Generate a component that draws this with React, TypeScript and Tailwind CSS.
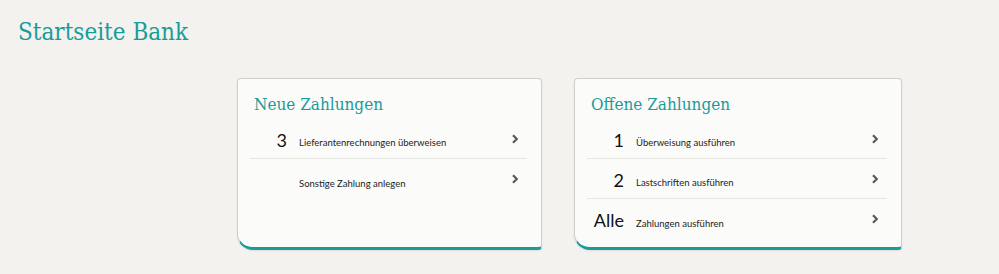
import React from "react";

type Row = { count?: string; label: string };

const cards: { title: string; rows: Row[]; width: string }[] = [
  {
    title: "Neue Zahlungen",
    width: "w-[305px]",
    rows: [
      { count: "3", label: "Lieferantenrechnungen überweisen" },
      { label: "Sonstige Zahlung anlegen" },
    ],
  },
  {
    title: "Offene Zahlungen",
    width: "w-[328px]",
    rows: [
      { count: "1", label: "Überweisung ausführen" },
      { count: "2", label: "Lastschriften ausführen" },
      { count: "Alle", label: "Zahlungen ausführen" },
    ],
  },
];

function Chevron() {
  return (
    <svg width="8" height="10" viewBox="0 0 8 10" className="text-[#5a5a5a]">
      <path d="M2 1.2 L5.8 5 L2 8.8" fill="none" stroke="currentColor" strokeWidth="2.2" />
    </svg>
  );
}

export default function App() {
  return (
    <div className="w-[999px] h-[274px] bg-[#f3f2ef] font-['Lato',sans-serif] overflow-hidden">
      <h1 className="pl-[18px] pt-[17px] text-[24px] leading-[30px] text-[#199c99] font-['DejaVu_Serif_Condensed','DejaVu_Serif',serif] font-light">
        Startseite Bank
      </h1>
      <div className="flex gap-[32px] pl-[237px] pt-[31px]">
        {cards.map((card) => (
          <div
            key={card.title}
            className={`${card.width} h-[172px] bg-[#fbfbfa] border border-[#cfcfcc] border-b-[3px] border-b-[#199c99] rounded-t-[4px] rounded-bl-[16px] rounded-br-[4px] shadow-[0_1px_2px_rgba(0,0,0,0.08)]`}
          >
            <div className="pl-[16px] pt-[12px] pb-[2px] text-[17px] leading-[26px] text-[#199c99] font-['DejaVu_Serif_Condensed','DejaVu_Serif',serif]">
              {card.title}
            </div>
            <div className="ml-[12px] mr-[14px]">
              {card.rows.map((row, i) => (
                <div
                  key={row.label}
                  className={`flex items-center h-[40px] pt-[8px] ${i < card.rows.length - 1 ? "border-b border-[#e6e6e3]" : ""}`}
                >
                  <div className="w-[37px] text-right text-[18px] leading-none font-normal text-[#111] -mt-[6px]">
                    {row.count ?? ""}
                  </div>
                  <div className="ml-[12px] flex-1 text-[9.5px] text-[#222] mt-[2px]">{row.label}</div>
                  <div className="mr-[8px] -mt-[8px]">
                    <Chevron />
                  </div>
                </div>
              ))}
            </div>
          </div>
        ))}
      </div>
    </div>
  );
}
